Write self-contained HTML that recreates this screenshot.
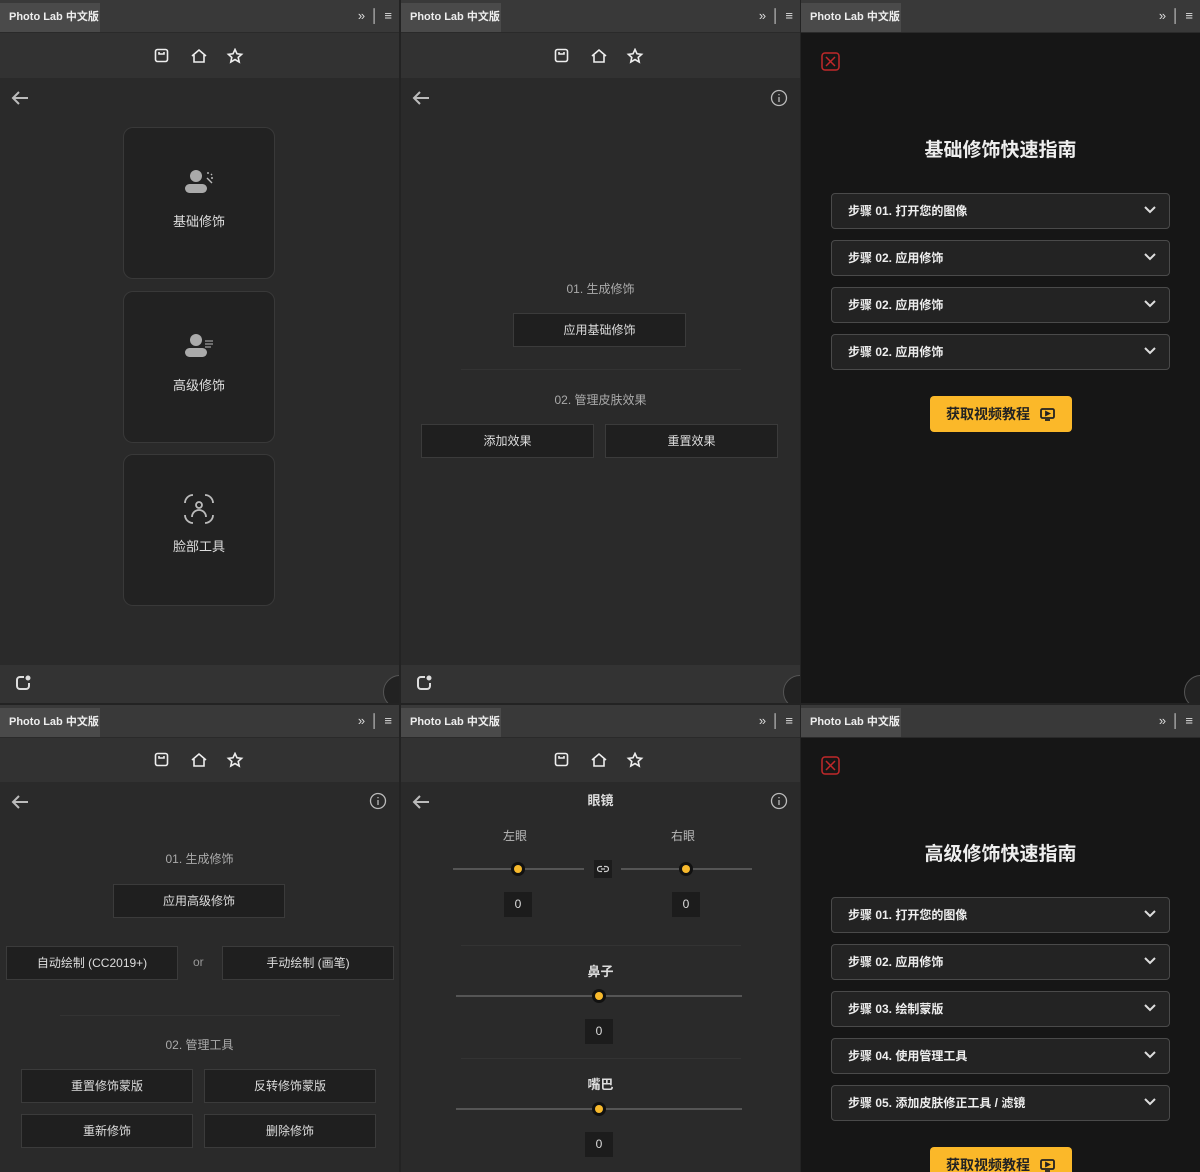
<!DOCTYPE html>
<html><head><meta charset="utf-8"><style>
*{margin:0;padding:0;box-sizing:border-box}
body{width:1200px;height:1172px;background:#232323;position:relative;overflow:hidden;font-family:"Liberation Sans","Noto Sans CJK SC",sans-serif;color:#d8d8d8;font-size:12px}
.p{position:absolute;width:399px;overflow:hidden;background:#2a2a2a}
.a{position:absolute}
.tabbar{position:absolute;left:0;top:0;width:100%;height:33px;background:#393939;border-bottom:1px solid #2a2a2a}
.tab{position:absolute;left:0;top:3px;width:100px;height:29px;background:#4a4a4a;color:#eee;font-size:11px;font-weight:bold;line-height:29px;padding-left:9px}
.tr{position:absolute;right:6px;top:8px;color:#ddd;font-size:13px;letter-spacing:1px}
.tool{position:absolute;left:0;top:33px;width:100%;height:45px;background:#323232}
.foot{position:absolute;left:0;top:665px;width:100%;height:38px;background:#333}
.btn{position:absolute;background:#1f1f1f;border:1px solid #3b3b3b;color:#ddd;text-align:center;font-size:12px}
.lbl{position:absolute;left:0;width:100%;text-align:center;color:#aaa;font-size:12px}
.card{position:absolute;left:123px;width:152px;height:152px;background:#222;border:1px solid #393939;border-radius:10px;text-align:center;color:#ddd;font-size:12px}
.acc{position:absolute;left:30px;width:339px;height:36px;background:#232323;border:1px solid #4a4a4a;border-radius:4px;color:#eee;font-size:12px;font-weight:bold;line-height:34px;padding-left:16px}
.acc svg{position:absolute;right:12px;top:11px}
.yb{position:absolute;left:129px;width:142px;height:36px;background:#fbb829;border-radius:4px;color:#222;font-weight:bold;font-size:14px;line-height:36px;padding-left:16px}
.dv{position:absolute;height:1px;background:#333}
.sl{position:absolute;height:2px;background:#555}
.th{position:absolute;width:14px;height:14px;border-radius:50%;background:#111;}
.th:after{content:"";position:absolute;left:3px;top:3px;width:8px;height:8px;border-radius:50%;background:#f7b92c}
.vb{position:absolute;width:28px;height:25px;background:#1c1c1c;text-align:center;line-height:25px;color:#ddd;font-size:12px}
.dark{background:#161616}
</style></head><body>

<!-- Panel 1 -->
<div class="p" style="left:0;top:0;height:703px">
<div class="tabbar"><div class="tab">Photo Lab 中文版</div><div class="tr">» │ ≡</div></div>
<div class="tool"><svg class="a" style="left:154px;top:15px" width="96" height="16" viewBox="0 0 96 16" fill="none" stroke="#eee" stroke-width="1.6"><rect x="1.5" y="1.5" width="12" height="12" rx="2"/><path d="M5 4v2h5V4"/><path d="M38 8l7-6 7 6M40 7v7h10V7"/><path d="M81 1.5l2 4.3 4.6.5-3.4 3.1 1 4.6-4.2-2.4-4.2 2.4 1-4.6-3.4-3.1 4.6-.5z"/></svg></div>
<svg class="a" style="left:11px;top:90px" width="18" height="16" viewBox="0 0 18 16" fill="none" stroke="#bbb" stroke-width="2"><path d="M17 8H2M8 2L2 8l6 6"/></svg>
<div class="card" style="top:127px"><svg style="margin-top:40px" width="32" height="30" viewBox="0 0 32 30"><circle cx="13" cy="8" r="6" fill="#aaa"/><rect x="2" y="16" width="22" height="9" rx="4.5" fill="#aaa"/><path d="M24 10l5 5M25 4v2M29 6l-1 1M30 10h-2" stroke="#bbb" stroke-width="1.4"/></svg><div style="margin-top:10px;font-size:13px">基础修饰</div></div>
<div class="card" style="top:291px"><svg style="margin-top:40px" width="32" height="30" viewBox="0 0 32 30"><circle cx="13" cy="8" r="6" fill="#aaa"/><rect x="2" y="16" width="22" height="9" rx="4.5" fill="#aaa"/><path d="M22 9h8M22 12h8M22 15h6" stroke="#bbb" stroke-width="1"/></svg><div style="margin-top:10px;font-size:13px">高级修饰</div></div>
<div class="card" style="top:454px"><svg style="margin-top:38px" width="32" height="32" viewBox="0 0 32 32" fill="none" stroke="#bbb" stroke-width="1.8"><path d="M2 10a8 8 0 0 1 8-8M22 2a8 8 0 0 1 8 8M30 22a8 8 0 0 1-8 8M10 30a8 8 0 0 1-8-8"/><circle cx="16" cy="12" r="3"/><path d="M9 24a7 7 0 0 1 14 0"/></svg><div style="margin-top:8px;font-size:13px">脸部工具</div></div>
<div class="foot"><svg class="a" style="left:15px;top:10px" width="16" height="16" viewBox="0 0 16 16" fill="none" stroke="#ddd" stroke-width="2"><path d="M9 2H5a3 3 0 0 0-3 3v6a3 3 0 0 0 3 3h6a3 3 0 0 0 3-3V8"/><circle cx="13" cy="3" r="1.5" fill="#ddd"/></svg><div class="a" style="left:383px;top:10px;width:34px;height:34px;border-radius:50%;background:#222;border:1px solid #555"></div></div>
</div>

<!-- Panel 2 -->
<div class="p" style="left:401px;top:0;height:703px">
<div class="tabbar"><div class="tab">Photo Lab 中文版</div><div class="tr">» │ ≡</div></div>
<div class="tool"><svg class="a" style="left:153px;top:15px" width="96" height="16" viewBox="0 0 96 16" fill="none" stroke="#eee" stroke-width="1.6"><rect x="1.5" y="1.5" width="12" height="12" rx="2"/><path d="M5 4v2h5V4"/><path d="M38 8l7-6 7 6M40 7v7h10V7"/><path d="M81 1.5l2 4.3 4.6.5-3.4 3.1 1 4.6-4.2-2.4-4.2 2.4 1-4.6-3.4-3.1 4.6-.5z"/></svg></div>
<svg class="a" style="left:11px;top:90px" width="18" height="16" viewBox="0 0 18 16" fill="none" stroke="#bbb" stroke-width="2"><path d="M17 8H2M8 2L2 8l6 6"/></svg>
<svg class="a" style="left:369px;top:89px" width="18" height="18" viewBox="0 0 18 18" fill="none" stroke="#bbb" stroke-width="1.3"><circle cx="9" cy="9" r="7.5"/><path d="M9 8v5M9 5v1.2"/></svg>
<div class="lbl" style="top:280px">01. 生成修饰</div>
<div class="btn" style="left:112px;top:313px;width:173px;height:34px;line-height:32px">应用基础修饰</div>
<div class="dv" style="left:60px;top:369px;width:280px"></div>
<div class="lbl" style="top:391px">02. 管理皮肤效果</div>
<div class="btn" style="left:20px;top:424px;width:173px;height:34px;line-height:32px">添加效果</div>
<div class="btn" style="left:204px;top:424px;width:173px;height:34px;line-height:32px">重置效果</div>
<div class="foot"><svg class="a" style="left:15px;top:10px" width="16" height="16" viewBox="0 0 16 16" fill="none" stroke="#ddd" stroke-width="2"><path d="M9 2H5a3 3 0 0 0-3 3v6a3 3 0 0 0 3 3h6a3 3 0 0 0 3-3V8"/><circle cx="13" cy="3" r="1.5" fill="#ddd"/></svg><div class="a" style="left:382px;top:10px;width:34px;height:34px;border-radius:50%;background:#222;border:1px solid #555"></div></div>
</div>

<!-- Panel 3 -->
<div class="p dark" style="left:801px;top:0;height:703px">
<div class="tabbar"><div class="tab">Photo Lab 中文版</div><div class="tr">» │ ≡</div></div>
<svg class="a" style="left:20px;top:52px" width="19" height="19" viewBox="0 0 19 19" fill="none" stroke="#c0282a" stroke-width="1.5"><rect x="1" y="1" width="17" height="17" rx="3"/><path d="M5 5l9 9M14 5l-9 9"/></svg>
<div class="a" style="left:0;top:135px;width:100%;text-align:center;font-size:19px;font-weight:bold;color:#eee">基础修饰快速指南</div>
<div class="acc" style="top:193px">步骤 01. 打开您的图像<svg width="14" height="10" viewBox="0 0 14 10" fill="none" stroke="#ddd" stroke-width="2"><path d="M2 2l5 5 5-5"/></svg></div>
<div class="acc" style="top:240px">步骤 02. 应用修饰<svg width="14" height="10" viewBox="0 0 14 10" fill="none" stroke="#ddd" stroke-width="2"><path d="M2 2l5 5 5-5"/></svg></div>
<div class="acc" style="top:287px">步骤 02. 应用修饰<svg width="14" height="10" viewBox="0 0 14 10" fill="none" stroke="#ddd" stroke-width="2"><path d="M2 2l5 5 5-5"/></svg></div>
<div class="acc" style="top:334px">步骤 02. 应用修饰<svg width="14" height="10" viewBox="0 0 14 10" fill="none" stroke="#ddd" stroke-width="2"><path d="M2 2l5 5 5-5"/></svg></div>
<div class="yb" style="top:396px">获取视频教程 <svg style="margin-left:6px;vertical-align:-2px" width="15" height="13" viewBox="0 0 15 13" fill="none" stroke="#222" stroke-width="1.8"><rect x="1" y="1" width="13" height="9" rx="1.5"/><path d="M6 4v3l3-1.5z" fill="#222"/><path d="M5 12h5"/></svg></div>
<div class="a" style="left:383px;top:675px;width:34px;height:34px;border-radius:50%;background:#222;border:1px solid #555"></div>
</div>

<!-- Panel 4 -->
<div class="p" style="left:0;top:705px;height:467px">
<div class="tabbar"><div class="tab">Photo Lab 中文版</div><div class="tr">» │ ≡</div></div>
<div class="tool" style="height:44px"><svg class="a" style="left:154px;top:14px" width="96" height="16" viewBox="0 0 96 16" fill="none" stroke="#eee" stroke-width="1.6"><rect x="1.5" y="1.5" width="12" height="12" rx="2"/><path d="M5 4v2h5V4"/><path d="M38 8l7-6 7 6M40 7v7h10V7"/><path d="M81 1.5l2 4.3 4.6.5-3.4 3.1 1 4.6-4.2-2.4-4.2 2.4 1-4.6-3.4-3.1 4.6-.5z"/></svg></div>
<svg class="a" style="left:11px;top:89px" width="18" height="16" viewBox="0 0 18 16" fill="none" stroke="#bbb" stroke-width="2"><path d="M17 8H2M8 2L2 8l6 6"/></svg>
<svg class="a" style="left:369px;top:87px" width="18" height="18" viewBox="0 0 18 18" fill="none" stroke="#bbb" stroke-width="1.3"><circle cx="9" cy="9" r="7.5"/><path d="M9 8v5M9 5v1.2"/></svg>
<div class="lbl" style="top:145px">01. 生成修饰</div>
<div class="btn" style="left:113px;top:179px;width:172px;height:34px;line-height:32px">应用高级修饰</div>
<div class="btn" style="left:6px;top:241px;width:172px;height:34px;line-height:32px">自动绘制 (CC2019+)</div>
<div class="a" style="left:193px;top:250px;color:#999">or</div>
<div class="btn" style="left:222px;top:241px;width:172px;height:34px;line-height:32px">手动绘制 (画笔)</div>
<div class="dv" style="left:60px;top:310px;width:280px"></div>
<div class="lbl" style="top:331px">02. 管理工具</div>
<div class="btn" style="left:21px;top:364px;width:172px;height:34px;line-height:32px">重置修饰蒙版</div>
<div class="btn" style="left:204px;top:364px;width:172px;height:34px;line-height:32px">反转修饰蒙版</div>
<div class="btn" style="left:21px;top:409px;width:172px;height:34px;line-height:32px">重新修饰</div>
<div class="btn" style="left:204px;top:409px;width:172px;height:34px;line-height:32px">删除修饰</div>
</div>

<!-- Panel 5 -->
<div class="p" style="left:401px;top:705px;height:467px">
<div class="tabbar"><div class="tab">Photo Lab 中文版</div><div class="tr">» │ ≡</div></div>
<div class="tool" style="height:44px"><svg class="a" style="left:153px;top:14px" width="96" height="16" viewBox="0 0 96 16" fill="none" stroke="#eee" stroke-width="1.6"><rect x="1.5" y="1.5" width="12" height="12" rx="2"/><path d="M5 4v2h5V4"/><path d="M38 8l7-6 7 6M40 7v7h10V7"/><path d="M81 1.5l2 4.3 4.6.5-3.4 3.1 1 4.6-4.2-2.4-4.2 2.4 1-4.6-3.4-3.1 4.6-.5z"/></svg></div>
<svg class="a" style="left:11px;top:89px" width="18" height="16" viewBox="0 0 18 16" fill="none" stroke="#bbb" stroke-width="2"><path d="M17 8H2M8 2L2 8l6 6"/></svg>
<svg class="a" style="left:369px;top:87px" width="18" height="18" viewBox="0 0 18 18" fill="none" stroke="#bbb" stroke-width="1.3"><circle cx="9" cy="9" r="7.5"/><path d="M9 8v5M9 5v1.2"/></svg>
<div class="lbl" style="top:85px;color:#ddd;font-weight:bold;font-size:13px">眼镜</div>
<div class="a" style="left:102px;top:122px;color:#bbb">左眼</div>
<div class="a" style="left:270px;top:122px;color:#bbb">右眼</div>
<div class="sl" style="left:52px;top:163px;width:131px"></div>
<div class="sl" style="left:220px;top:163px;width:131px"></div>
<div class="th" style="left:110px;top:157px"></div>
<div class="th" style="left:278px;top:157px"></div>
<div class="a" style="left:193px;top:155px;width:18px;height:18px;background:#1c1c1c"><svg style="position:absolute;left:3px;top:5px" width="12" height="8" viewBox="0 0 12 8" fill="none" stroke="#ccc" stroke-width="1.2"><path d="M5 1.5H3a2.5 2.5 0 0 0 0 5h2M7 1.5h2a2.5 2.5 0 0 1 0 5H7M4 4h4"/></svg></div>
<div class="vb" style="left:103px;top:187px">0</div>
<div class="vb" style="left:271px;top:187px">0</div>
<div class="dv" style="left:60px;top:240px;width:280px"></div>
<div class="lbl" style="top:256px;color:#ddd;font-weight:bold;font-size:13px">鼻子</div>
<div class="sl" style="left:55px;top:290px;width:286px"></div>
<div class="th" style="left:191px;top:284px"></div>
<div class="vb" style="left:184px;top:314px">0</div>
<div class="dv" style="left:60px;top:353px;width:280px"></div>
<div class="lbl" style="top:369px;color:#ddd;font-weight:bold;font-size:13px">嘴巴</div>
<div class="sl" style="left:55px;top:403px;width:286px"></div>
<div class="th" style="left:191px;top:397px"></div>
<div class="vb" style="left:184px;top:427px">0</div>
</div>

<!-- Panel 6 -->
<div class="p dark" style="left:801px;top:705px;height:467px">
<div class="tabbar"><div class="tab">Photo Lab 中文版</div><div class="tr">» │ ≡</div></div>
<svg class="a" style="left:20px;top:51px" width="19" height="19" viewBox="0 0 19 19" fill="none" stroke="#c0282a" stroke-width="1.5"><rect x="1" y="1" width="17" height="17" rx="3"/><path d="M5 5l9 9M14 5l-9 9"/></svg>
<div class="a" style="left:0;top:134px;width:100%;text-align:center;font-size:19px;font-weight:bold;color:#eee">高级修饰快速指南</div>
<div class="acc" style="top:192px">步骤 01. 打开您的图像<svg width="14" height="10" viewBox="0 0 14 10" fill="none" stroke="#ddd" stroke-width="2"><path d="M2 2l5 5 5-5"/></svg></div>
<div class="acc" style="top:239px">步骤 02. 应用修饰<svg width="14" height="10" viewBox="0 0 14 10" fill="none" stroke="#ddd" stroke-width="2"><path d="M2 2l5 5 5-5"/></svg></div>
<div class="acc" style="top:286px">步骤 03. 绘制蒙版<svg width="14" height="10" viewBox="0 0 14 10" fill="none" stroke="#ddd" stroke-width="2"><path d="M2 2l5 5 5-5"/></svg></div>
<div class="acc" style="top:333px">步骤 04. 使用管理工具<svg width="14" height="10" viewBox="0 0 14 10" fill="none" stroke="#ddd" stroke-width="2"><path d="M2 2l5 5 5-5"/></svg></div>
<div class="acc" style="top:380px">步骤 05. 添加皮肤修正工具 / 滤镜<svg width="14" height="10" viewBox="0 0 14 10" fill="none" stroke="#ddd" stroke-width="2"><path d="M2 2l5 5 5-5"/></svg></div>
<div class="yb" style="top:442px">获取视频教程 <svg style="margin-left:6px;vertical-align:-2px" width="15" height="13" viewBox="0 0 15 13" fill="none" stroke="#222" stroke-width="1.8"><rect x="1" y="1" width="13" height="9" rx="1.5"/><path d="M6 4v3l3-1.5z" fill="#222"/><path d="M5 12h5"/></svg></div>
</div>
</body></html>
